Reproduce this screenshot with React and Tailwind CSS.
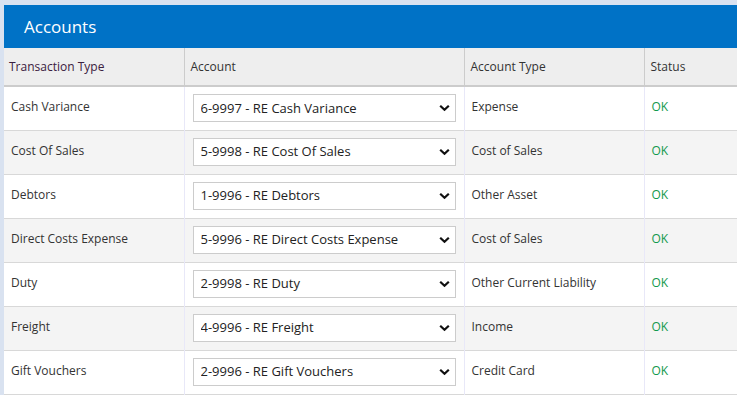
import React from "react";

const rows = [
  { type: "Cash Variance", account: "6-9997 - RE Cash Variance", accountType: "Expense" },
  { type: "Cost Of Sales", account: "5-9998 - RE Cost Of Sales", accountType: "Cost of Sales" },
  { type: "Debtors", account: "1-9996 - RE Debtors", accountType: "Other Asset" },
  { type: "Direct Costs Expense", account: "5-9996 - RE Direct Costs Expense", accountType: "Cost of Sales" },
  { type: "Duty", account: "2-9998 - RE Duty", accountType: "Other Current Liability" },
  { type: "Freight", account: "4-9996 - RE Freight", accountType: "Income" },
  { type: "Gift Vouchers", account: "2-9996 - RE Gift Vouchers", accountType: "Credit Card" },
];

const Chevron = () => (
  <svg className="pointer-events-none absolute right-[6px] top-1/2 -translate-y-1/2" width="11" height="7" viewBox="0 0 11 7">
    <path d="M1.2 1.2 L5.5 5.3 L9.8 1.2" fill="none" stroke="#111" strokeWidth="2.2" />
  </svg>
);

const AccountSelect = ({ value }) => (
  <div className="relative w-full">
    <select
      defaultValue={value}
      className="appearance-none w-full h-[28px] border border-[#cccccc] bg-white pl-[7px] pr-6 text-[13px] text-[#222] outline-none"
    >
      <option>{value}</option>
    </select>
    <Chevron />
  </div>
);

export default function App() {
  return (
    <div
      className="min-h-[397px] bg-white"
      style={{ fontFamily: '"Open Sans", "Noto Sans", sans-serif' }}
    >
      <div className="bg-[#d9e2f0] pl-[4px] pt-[5px]">
        <div className="bg-[#0072c6] h-[43px] flex items-center pl-[20px]">
          <h1 className="text-white text-[17px] font-normal">Accounts</h1>
        </div>
        <table className="w-full border-collapse table-fixed text-[12px] text-[#333]">
          <colgroup>
            <col className="w-[180px]" />
            <col className="w-[280px]" />
            <col className="w-[180px]" />
            <col />
          </colgroup>
          <thead>
            <tr className="bg-[#eeeeee] h-[38px] border-b-2 border-[#cccccc] text-left">
              <th className="font-normal px-[5px] text-[#3a2040]">Transaction Type</th>
              <th className="font-normal px-[6px] border-l border-[#cccccc]">Account</th>
              <th className="font-normal px-[6px] border-l border-[#cccccc]">Account Type</th>
              <th className="font-normal px-[6px] border-l border-[#cccccc]">Status</th>
            </tr>
          </thead>
          <tbody>
            {rows.map((r, i) => (
              <tr
                key={i}
                className={`h-[44px] border-b border-[#d8d8d8] ${i % 2 === 0 ? "bg-white" : "bg-[#f4f4f4]"}`}
              >
                <td className="px-[7px] pb-[2px]">{r.type}</td>
                <td className="px-[8px] border-l border-[#e8e8f8]">
                  <AccountSelect value={r.account} />
                </td>
                <td className="px-[7px] pb-[2px] border-l border-[#e8e8f8]">{r.accountType}</td>
                <td className="px-[7px] pb-[2px] border-l border-[#e8e8f8] text-[#13994c]">OK</td>
              </tr>
            ))}
          </tbody>
        </table>
      </div>
    </div>
  );
}
